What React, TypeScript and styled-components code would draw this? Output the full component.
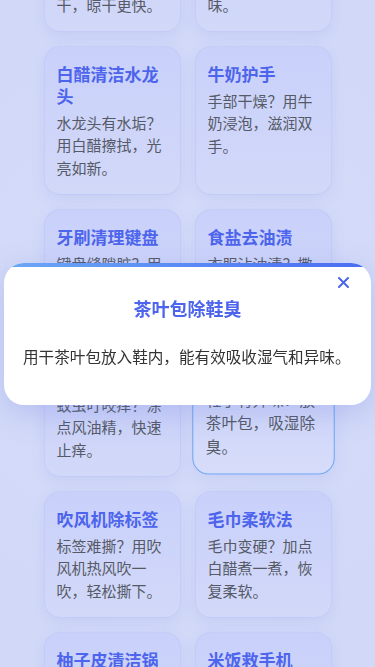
import React from "react";
import styled, { createGlobalStyle } from "styled-components";

const GlobalStyle = createGlobalStyle`
  html, body {
    margin: 0;
    padding: 0;
    background: #d3daf8;
  }
  body {
    font-family: "Noto Sans CJK SC", "Noto Sans", sans-serif;
    color: #555;
  }
  * { box-sizing: border-box; }
`;

const Page = styled.div`
  min-height: 100vh;
  background: radial-gradient(circle at 50% 40%, #d6dcf9 0%, #d2d9f8 60%, #d0d7f8 100%);
  overflow: hidden;
`;

const Grid = styled.main`
  width: 288px;
  margin: -95px auto 0;
  display: grid;
  grid-template-columns: 1fr 1fr;
  gap: 14px;
  padding-bottom: 40px;
`;

const Card = styled.div<{ $active?: boolean }>`
  border-radius: 16px;
  padding: 16px 12px 15px;
  background: ${(p) =>
    p.$active
      ? "linear-gradient(180deg, #cdd5fb 0%, #d6dcf9 100%)"
      : "linear-gradient(180deg, #c9d1fb 0%, #d2d8f8 100%)"};
  border: 1px solid ${(p) => (p.$active ? "#6fa6f5" : "rgba(190, 198, 245, 0.6)")};
  box-shadow: 0 4px 14px rgba(120, 135, 225, 0.14);
  transform: ${(p) => (p.$active ? "translateY(-5px) scale(1.04)" : "none")};
`;

const CardTitle = styled.h3`
  margin: 0 0 4.5px;
  font-size: 17px;
  line-height: 22px;
  font-weight: 700;
  color: #4d64ec;
`;

const CardText = styled.p`
  margin: 0;
  font-size: 15px;
  line-height: 22.5px;
  color: #555a66;
`;

const Overlay = styled.div`
  position: fixed;
  inset: 0;
  display: flex;
  align-items: center;
  justify-content: center;
  padding: 0 4px;
`;

const Modal = styled.div`
  position: relative;
  width: 100%;
  background: #fff;
  border-radius: 20px;
  overflow: hidden;
  padding: 32px 19px 37px;
  box-shadow: 0 8px 30px rgba(90, 110, 220, 0.25);
  &::before {
    content: "";
    position: absolute;
    left: 0;
    right: 0;
    top: 0;
    height: 4px;
    background: linear-gradient(90deg, #6aa8f7 0%, #4a6cf2 100%);
  }
`;

const CloseButton = styled.button`
  position: absolute;
  top: 8px;
  right: 16px;
  width: 24px;
  height: 24px;
  padding: 0;
  border: none;
  background: transparent;
  display: flex;
  align-items: center;
  justify-content: center;
  cursor: pointer;
`;

const ModalTitle = styled.h2`
  margin: 0 0 22px;
  text-align: center;
  font-size: 18px;
  line-height: 27px;
  font-weight: 700;
  color: #4d64ec;
`;

const ModalText = styled.p`
  margin: 0;
  font-size: 15.6px;
  line-height: 24px;
  color: #333;
`;

type Tip = { title: string; text: string; active?: boolean };

const tips: Tip[] = [
  { title: "毛巾吸水快干", text: "衣服难干？用干毛巾包裹拧一拧干，晾干更快。" },
  { title: "柠檬去冰箱味", text: "冰箱有异味？放入柠檬片去除异味。" },
  { title: "白醋清洁水龙头", text: "水龙头有水垢？用白醋擦拭，光亮如新。" },
  { title: "牛奶护手", text: "手部干燥？用牛奶浸泡，滋润双手。" },
  { title: "牙刷清理键盘", text: "键盘缝隙脏？用旧牙刷清理，干净整洁。" },
  { title: "食盐去油渍", text: "衣服沾油渍？撒点食盐，轻搓即可去除。" },
  { title: "风油精止痒", text: "蚊虫叮咬痒？涂点风油精，快速止痒。" },
  { title: "茶叶包除鞋臭", text: "鞋子有异味？放茶叶包，吸湿除臭。", active: true },
  { title: "吹风机除标签", text: "标签难撕？用吹风机热风吹一吹，轻松撕下。" },
  { title: "毛巾柔软法", text: "毛巾变硬？加点白醋煮一煮，恢复柔软。" },
  { title: "柚子皮清洁锅具", text: "锅具有油污？用柚子皮擦一擦，洁净光亮。" },
  { title: "米饭救手机", text: "手机进水？埋入米饭中，吸干水分。" },
];

export default function App() {
  return (
    <>
      <GlobalStyle />
      <Page>
        <Grid>
          {tips.map((t) => (
            <Card key={t.title} $active={t.active}>
              <CardTitle>{t.title}</CardTitle>
              <CardText>{t.text}</CardText>
            </Card>
          ))}
        </Grid>
        <Overlay>
          <Modal>
            <CloseButton aria-label="关闭">
              <svg width="11" height="11" viewBox="0 0 11 11">
                <path d="M1 1 L10 10 M10 1 L1 10" stroke="#4d64ec" strokeWidth="2" strokeLinecap="round" />
              </svg>
            </CloseButton>
            <ModalTitle>茶叶包除鞋臭</ModalTitle>
            <ModalText>用干茶叶包放入鞋内，能有效吸收湿气和异味。</ModalText>
          </Modal>
        </Overlay>
      </Page>
    </>
  );
}
